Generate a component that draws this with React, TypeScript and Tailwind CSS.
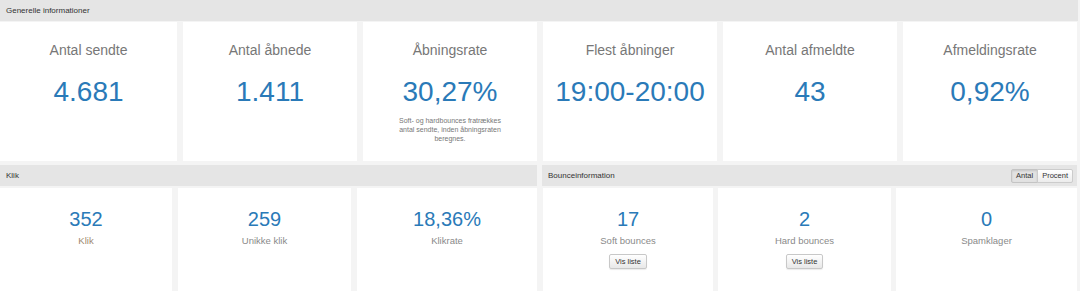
import React from 'react'

interface TopStat {
  title: string
  value: string
  note?: string
}

interface SmallStat {
  value: string
  label: string
  labelClass?: string
  list?: boolean
}

const topStats: TopStat[] = [
  { title: 'Antal sendte', value: '4.681' },
  { title: 'Antal åbnede', value: '1.411' },
  {
    title: 'Åbningsrate',
    value: '30,27%',
    note: 'Soft- og hardbounces fratrækkes antal sendte, inden åbningsraten beregnes.',
  },
  { title: 'Flest åbninger', value: '19:00-20:00' },
  { title: 'Antal afmeldte', value: '43' },
  { title: 'Afmeldingsrate', value: '0,92%' },
]

const clickStats: SmallStat[] = [
  { value: '352', label: 'Klik', labelClass: 'text-[#a08a70]' },
  { value: '259', label: 'Unikke klik' },
  { value: '18,36%', label: 'Klikrate' },
]

const bounceStats: SmallStat[] = [
  { value: '17', label: 'Soft bounces', list: true },
  { value: '2', label: 'Hard bounces', list: true },
  { value: '0', label: 'Spamklager' },
]

function PanelHeader({ title, children }: { title: string; children?: React.ReactNode }) {
  return (
    <div className="flex h-[21px] items-center justify-between bg-[#e5e5e5] pl-[6px] pr-[4px]">
      <span className="text-[8px] text-[#333]">{title}</span>
      {children}
    </div>
  )
}

function SmallCard({ stat }: { stat: SmallStat }) {
  return (
    <div className="flex flex-col items-center bg-white pt-[19px]">
      <div className="text-[20px] leading-[24px] text-[#2a7ab8]">{stat.value}</div>
      <div className={`mt-[4px] text-[9.5px] leading-[12px] ${stat.labelClass ?? 'text-[#8a8a8a]'}`}>
        {stat.label}
      </div>
      {stat.list && (
        <button className="mt-[7px] h-[15px] rounded-[2px] border border-[#c8c8c8] bg-gradient-to-b from-white to-[#e8e8e8] px-[5px] text-[7.5px] leading-[13px] text-[#333] shadow-[0_1px_1px_rgba(0,0,0,0.08)]">
          Vis liste
        </button>
      )}
    </div>
  )
}

export default function App() {
  return (
    <div className="h-[291px] w-[1080px] overflow-hidden bg-[#f4f4f4] font-['Liberation_Sans',Arial,sans-serif]">
      <div className="w-[1078px]">
        <PanelHeader title="Generelle informationer" />
      </div>

      <div className="mt-[1px] grid h-[139px] grid-cols-[177px_repeat(5,174px)] gap-x-[6px]">
        {topStats.map((s) => (
          <div key={s.title} className="flex flex-col items-center bg-white pt-[20px]">
            <div className="text-[14px] leading-[16px] text-[#777]">{s.title}</div>
            <div className="mt-[18px] text-[28px] leading-[32px] text-[#2a7ab8]">{s.value}</div>
            {s.note && (
              <p className="mt-[8px] w-[112px] text-center text-[7px] leading-[9px] text-[#777]">{s.note}</p>
            )}
          </div>
        ))}
      </div>

      <div className="mt-[4px] flex gap-[5px]">
        <div className="flex w-[537px] flex-col">
          <PanelHeader title="Klik" />
          <div className="mt-[2px] grid h-[110px] grid-cols-[172px_173px_1fr] gap-x-[6px]">
            {clickStats.map((s) => (
              <SmallCard key={s.label} stat={s} />
            ))}
          </div>
        </div>

        <div className="flex w-[535px] flex-col">
          <PanelHeader title="Bounceinformation">
            <div className="flex h-[14px] text-[7.5px] text-[#333]">
              <button className="rounded-l-[2px] border border-[#c4c4c4] bg-[#e2e2e2] px-[4px] leading-[12px] shadow-[inset_0_1px_2px_rgba(0,0,0,0.12)]">
                Antal
              </button>
              <button className="-ml-px rounded-r-[2px] border border-[#cccccc] bg-gradient-to-b from-white to-[#ececec] px-[4px] leading-[12px]">
                Procent
              </button>
            </div>
          </PanelHeader>
          <div className="mt-[2px] grid h-[110px] grid-cols-[170px_173px_1fr] gap-x-[5px] pl-[1px]">
            {bounceStats.map((s) => (
              <SmallCard key={s.label} stat={s} />
            ))}
          </div>
        </div>
      </div>
    </div>
  )
}
